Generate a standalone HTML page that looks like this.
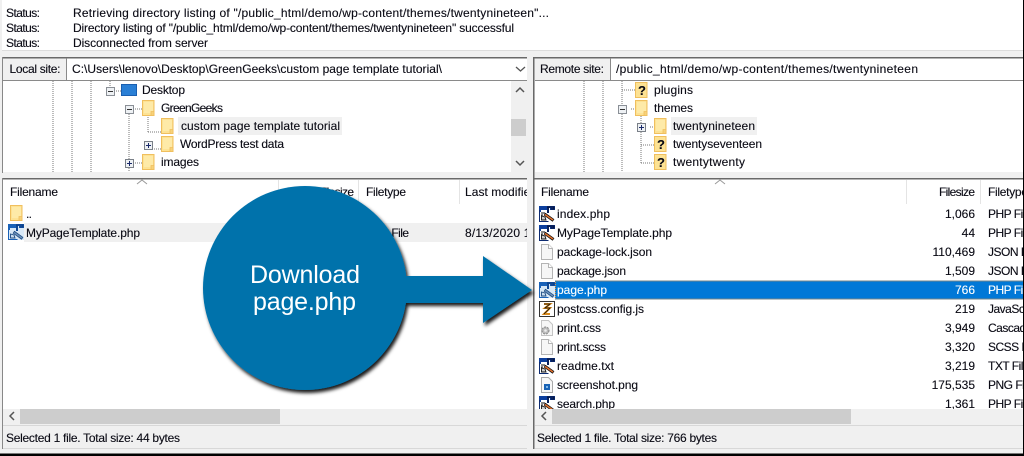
<!DOCTYPE html>
<html><head><meta charset="utf-8"><style>
html,body{margin:0;padding:0;background:#f0f0f0;width:1024px;height:456px;overflow:hidden}
svg{display:block}
text{font-family:"Liberation Sans",sans-serif;font-size:12px;fill:#0a0a14;stroke:#0a0a14;stroke-width:.12}
.d{stroke:#777;stroke-width:1;stroke-dasharray:1 1;fill:none}
.chev{fill:none;stroke:#555;stroke-width:1.3}
</style></head><body>
<svg width="1024" height="456" viewBox="0 0 1024 456" xmlns="http://www.w3.org/2000/svg">
<defs>
<symbol id="fo" viewBox="0 0 13 16" width="13" height="16"><path d="M.5.5h11.500v15H.5z" fill="#fde293" stroke="#f0bf5e"/><path d="M2 2h9v11H2z" fill="#feeaa8"/><path d="M9 15.500v-4h3v4z" fill="#f7d27a" stroke="#f0bf5e" stroke-width=".8"/></symbol>
<symbol id="php" viewBox="0 0 16 16" width="16" height="16"><rect width="16" height="16" fill="#fff"/><path d="M0 0h16v4h-5v-2h-1v5H8V4H2v2H0z" fill="#0c3f9e"/><path d="M8 1h7v2h-3.500M9 1v6" stroke="#06123c" fill="none" stroke-width="1.300"/><path d="M.5 4v11.500h9" fill="none" stroke="#0c2a70"/><path d="M2 7h4M2 9h2" stroke="#111"/><path d="M2.500 10l3.500 1 1 3H2.500z" fill="#ccc" stroke="#111" stroke-width=".9"/><path d="M5.500 8l9 6.500" stroke="#111" stroke-width="3"/><path d="M6 8.500l8 5.500" stroke="#e2702c" stroke-width="1.600"/></symbol>
<symbol id="phps" viewBox="0 0 16 16" width="16" height="16"><rect width="16" height="16" fill="#d8e8f6"/><path d="M0 0h16v4h-5v-2h-1v5H8V4H2v2H0z" fill="#1a62b8"/><path d="M8 1h7v2h-3.500M9 1v6" stroke="#0a3a80" fill="none" stroke-width="1.300"/><path d="M.5 4v11.500h9" fill="none" stroke="#1a62b8"/><path d="M2.500 10l3.500 1 1 3H2.500z" fill="#c8dcef" stroke="#1c4a80" stroke-width=".9"/><path d="M5.500 8l9 6.500" stroke="#1c4a80" stroke-width="3"/><path d="M6 8.500l8 5.500" stroke="#6a8fb8" stroke-width="1.600"/></symbol>
<symbol id="doc" viewBox="0 0 16 16" width="16" height="16"><path d="M2.500.5h7l4 4v11h-11z" fill="#f6f6f6" stroke="#b4b4b4"/><path d="M9.500.5v4h4" fill="#fff" stroke="#b4b4b4"/></symbol>
<symbol id="js" viewBox="0 0 16 16" width="16" height="16"><rect x=".5" y=".5" width="15" height="15" fill="#fff" stroke="#333"/><path d="M5 3h6l-5 4h5l-6 6h6" fill="none" stroke="#d98a1a" stroke-width="2"/><path d="M5 3h6l-5 4h5l-6 6" fill="none" stroke="#111" stroke-width=".8"/></symbol>
<symbol id="css" viewBox="0 0 16 16" width="16" height="16"><path d="M2.500.5h7l4 4v11h-11z" fill="#f6f6f6" stroke="#c4c4c4"/><circle cx="6.500" cy="10.500" r="3.500" fill="#bbb" stroke="#888" stroke-dasharray="2 1"/><circle cx="6.500" cy="10.500" r="1.300" fill="#eee"/></symbol>
<symbol id="png" viewBox="0 0 16 16" width="16" height="16"><path d="M2.500.5h7l4 4v11h-11z" fill="#f8f8f8" stroke="#aaa"/><rect x="5" y="7" width="6" height="6" fill="#1a63b5"/><rect x="7" y="9" width="2" height="2" fill="#7fb8ea"/></symbol>
<symbol id="q" viewBox="0 0 13 16" width="13" height="16"><path d="M.5.500h11.500v15H.5z" fill="#fde293" stroke="#f0bf5e"/></symbol>
<symbol id="minus" viewBox="0 0 9 9" width="9" height="9"><rect x=".5" y=".5" width="8" height="8" fill="#eef1f4" stroke="#8a8f96"/><path d="M2 4.500h5" stroke="#333"/></symbol>
<symbol id="plus" viewBox="0 0 9 9" width="9" height="9"><rect x=".5" y=".5" width="8" height="8" fill="#eef1f4" stroke="#7a8088"/><path d="M2 4.500h5M4.500 2v5" stroke="#1a2a6a"/></symbol>
<clipPath id="cR"><rect x="536" y="204" width="487" height="205"/></clipPath>
<clipPath id="cL"><rect x="3" y="180" width="524" height="229"/></clipPath>
<clipPath id="cH"><rect x="980" y="180" width="43" height="24"/></clipPath>
<filter id="sh" x="-10%" y="-10%" width="125%" height="125%"><feDropShadow dx="2" dy="3" stdDeviation="1.800" flood-color="#000" flood-opacity=".9"/></filter>
</defs>

<rect width="1024" height="456" fill="#f0f0f0"/>
<!-- message log -->
<rect x="2" y="0" width="1021" height="50" fill="#fff"/>
<rect x="2" y="50" width="1021" height="1" fill="#dcdcdc"/>
<text x="6" y="17" textLength="34">Status:</text>
<text x="6" y="32" textLength="34">Status:</text>
<text x="6" y="47" textLength="34">Status:</text>
<text x="73" y="17" textLength="476">Retrieving directory listing of "/public_html/demo/wp-content/themes/twentynineteen"...</text>
<text x="73" y="32" textLength="441">Directory listing of "/public_html/demo/wp-content/themes/twentynineteen" successful</text>
<text x="73" y="47" textLength="135">Disconnected from server</text>

<!-- left top -->
<rect x="3" y="58" width="524" height="114" fill="#fff"/>
<rect x="3" y="57" width="524" height="1.500" fill="#696969"/>
<rect x="3" y="58.500" width="63" height="21.500" fill="#f0f0f0"/>
<rect x="3" y="80" width="524" height="1" fill="#8a8a8a"/>
<rect x="66" y="58" width="1" height="22" fill="#8a8a8a"/>
<rect x="2" y="57" width="1" height="116" fill="#888"/>
<text x="9.500" y="73" textLength="51">Local site:</text>
<text x="72" y="73" textLength="370">C:\Users\lenovo\Desktop\GreenGeeks\custom page template tutorial\</text>
<path class="chev" d="M516 67l4.500 4 4.500-4"/>
<!-- left tree -->
<rect x="511" y="81" width="16" height="91" fill="#f0f0f0"/>
<rect x="511" y="119" width="15" height="17" fill="#cdcdcd"/>
<path d="M516 92l4-4 4 4M516 161l4 4 4-4" fill="none" stroke="#555" stroke-width="1.500"/>
<path class="d" d="M53 81v91M72 81v91M91 81v91M110 81v10M129 114v58M148 113v19M148 132h13M129 109h13M110 91h11M148 149h13M129 163h13"/>
<use href="#minus" x="106" y="87"/>
<use href="#minus" x="125" y="105"/>
<use href="#plus" x="144" y="141"/>
<use href="#plus" x="125" y="159"/>
<rect x="121.500" y="84.500" width="15" height="11" fill="#2a7fd5" stroke="#1a5fb0"/>
<use href="#fo" x="142" y="100"/>
<use href="#fo" x="161" y="118"/>
<use href="#fo" x="161" y="136"/>
<use href="#fo" x="142" y="154"/>
<rect x="178" y="117" width="164" height="18" fill="#f0f0f0"/>
<text x="142" y="94" textLength="43">Desktop</text>
<text x="161" y="112" textLength="62">GreenGeeks</text>
<text x="181" y="130" textLength="159">custom page template tutorial</text>
<text x="180" y="148" textLength="104">WordPress test data</text>
<text x="161" y="166" textLength="38">images</text>

<!-- right top -->
<rect x="535" y="58" width="488" height="114" fill="#fff"/>
<rect x="533" y="57" width="490" height="1.500" fill="#696969"/>
<rect x="535" y="58.500" width="75" height="21.500" fill="#f0f0f0"/>
<rect x="535" y="80" width="488" height="1" fill="#8a8a8a"/>
<rect x="610" y="58" width="1" height="22" fill="#8a8a8a"/>
<rect x="533" y="57" width="1.500" height="116" fill="#696969"/>
<text x="540" y="73" textLength="64">Remote site:</text>
<text x="616" y="73" textLength="302">/public_html/demo/wp-content/themes/twentynineteen</text>
<path class="d" d="M584 81v91M603 81v91M622 81v24M622 90h13M622 114v58M631 109h4M641 114v49M641 145h13M641 163h13M650 127h4"/>
<use href="#minus" x="618" y="105"/>
<use href="#plus" x="637" y="123"/>
<use href="#q" x="635" y="82"/>
<use href="#fo" x="635" y="100"/>
<use href="#fo" x="654" y="118"/>
<use href="#q" x="654" y="136"/>
<use href="#q" x="654" y="154"/>
<text x="638" y="95" style="font-weight:bold;font-size:13px">?</text>
<text x="657" y="149" style="font-weight:bold;font-size:13px">?</text>
<text x="657" y="167" style="font-weight:bold;font-size:13px">?</text>
<rect x="671" y="117" width="86" height="18" fill="#f0f0f0"/>
<text x="654" y="94" textLength="39">plugins</text>
<text x="654" y="112" textLength="39">themes</text>
<text x="673" y="130" textLength="82">twentynineteen</text>
<text x="673" y="148" textLength="89">twentyseventeen</text>
<text x="673" y="166" textLength="72">twentytwenty</text>

<!-- left list -->
<rect x="3" y="179" width="524" height="246" fill="#fff"/>
<rect x="2" y="178" width="525" height="1.500" fill="#696969"/>
<rect x="2" y="178" width="1" height="271" fill="#888"/>
<path d="M137 184l5-4 5 4" fill="none" stroke="#999"/>
<path d="M278.500 180v24M358.500 180v24M459.500 180v24" stroke="#e4e4e4"/>
<text x="10" y="196" textLength="48">Filename</text>
<text x="318" y="196" textLength="36">Filesize</text>
<text x="366" y="196" textLength="40">Filetype</text>
<g clip-path="url(#cL)">
<text x="465" y="196" textLength="72">Last modified</text>
<rect x="24" y="223" width="503" height="19" fill="#f0f0f0"/>
<text x="26" y="218" textLength="6">..</text>
<text x="26" y="237" textLength="114">MyPageTemplate.php</text>
<text x="366" y="237" textLength="43">PHP File</text>
<text x="465" y="237" textLength="100">8/13/2020 1:23:45</text>
</g>
<use href="#fo" x="10" y="205"/>
<use href="#phps" x="8" y="224"/>

<!-- right list -->
<rect x="535" y="179" width="488" height="246" fill="#fff"/>
<rect x="533" y="178" width="490" height="1.500" fill="#696969"/>
<rect x="533" y="178" width="1.500" height="271" fill="#696969"/>
<path d="M715 184l5-4 5 4" fill="none" stroke="#999"/>
<path d="M906.500 180v24M980.500 180v24" stroke="#e4e4e4"/>
<text x="541" y="196" textLength="48">Filename</text>
<text x="939" y="196" textLength="36">Filesize</text>
<g clip-path="url(#cH)"><text x="988" y="196" textLength="40">Filetype</text></g>
<rect x="555" y="280.500" width="468" height="19" fill="#0078d7"/>
<rect x="555.500" y="281" width="468" height="18" fill="none" stroke="#e8903a" stroke-dasharray="1 1"/>
<g clip-path="url(#cR)">
<use href="#php" x="539" y="206"/>
<use href="#php" x="539" y="225"/>
<use href="#doc" x="539" y="244"/>
<use href="#doc" x="539" y="263"/>
<use href="#phps" x="539" y="282"/>
<use href="#js" x="539" y="301"/>
<use href="#css" x="539" y="320"/>
<use href="#doc" x="539" y="339"/>
<use href="#php" x="539" y="358"/>
<use href="#png" x="539" y="377"/>
<use href="#php" x="539" y="396"/>
<text x="557" y="218" textLength="53">index.php</text>
<text x="557" y="237" textLength="115">MyPageTemplate.php</text>
<text x="557" y="256" textLength="95">package-lock.json</text>
<text x="557" y="275" textLength="69">package.json</text>
<text x="557" y="294" textLength="50" style="fill:#fff;stroke:#fff">page.php</text>
<text x="557" y="313" textLength="87">postcss.config.js</text>
<text x="557" y="332" textLength="44">print.css</text>
<text x="557" y="351" textLength="49">print.scss</text>
<text x="557" y="370" textLength="57">readme.txt</text>
<text x="557" y="389" textLength="81">screenshot.png</text>
<text x="557" y="408" textLength="58">search.php</text>
<g text-anchor="end">
<text x="975" y="218">1,066</text>
<text x="975" y="237">44</text>
<text x="975" y="256">110,469</text>
<text x="975" y="275">1,509</text>
<text x="975" y="294" style="fill:#fff;stroke:#fff">766</text>
<text x="975" y="313">219</text>
<text x="975" y="332">3,949</text>
<text x="975" y="351">3,320</text>
<text x="975" y="370">3,219</text>
<text x="975" y="389">175,535</text>
<text x="975" y="408">1,361</text>
</g>
<g style="letter-spacing:-.5px">
<text x="988" y="218">PHP File</text>
<text x="988" y="237">PHP File</text>
<text x="988" y="256">JSON File</text>
<text x="988" y="275">JSON File</text>
<text x="988" y="294" style="fill:#fff;stroke:#fff">PHP File</text>
<text x="988" y="313">JavaScript</text>
<text x="988" y="332">Cascading</text>
<text x="988" y="351">SCSS File</text>
<text x="988" y="370">TXT File</text>
<text x="988" y="389">PNG File</text>
<text x="988" y="408">PHP File</text>
</g>
</g>

<!-- scrollbars -->
<rect x="3" y="409" width="524" height="16" fill="#f0f0f0"/>
<rect x="20" y="409" width="260" height="15" fill="#cdcdcd"/>
<path d="M14 412l-4 4 4 4" fill="none" stroke="#555" stroke-width="1.500"/>
<rect x="535" y="409" width="488" height="16" fill="#f0f0f0"/>
<rect x="552" y="409" width="299" height="15" fill="#cdcdcd"/>
<path d="M546 412l-4 4 4 4" fill="none" stroke="#555" stroke-width="1.500"/>
<rect x="3" y="425" width="524" height="1" fill="#d8d8d8"/>
<rect x="535" y="425" width="488" height="1" fill="#d8d8d8"/>
<text x="6" y="442" textLength="174">Selected 1 file. Total size: 44 bytes</text>
<text x="537" y="442" textLength="180">Selected 1 file. Total size: 766 bytes</text>
<rect x="3" y="448" width="524" height="1" fill="#d8d8d8"/>
<rect x="535" y="448" width="488" height="1" fill="#d8d8d8"/>

<!-- edges -->
<rect x="527" y="51" width="6" height="403" fill="#f0f0f0"/>
<rect x="533" y="57" width="1.500" height="392" fill="#696969"/>
<rect x="1023" y="0" width="1" height="456" fill="#000"/>
<rect x="0" y="453.500" width="1024" height="2.500" fill="#000"/>

<!-- callout -->
<g filter="url(#sh)">
<path d="M395 276H483V256L532 290 483 323V303H395z" fill="#0272ab"/>
<circle cx="305" cy="288" r="102" fill="#0272ab"/>
</g>
<text x="250" y="283" textLength="110" style="font-size:25px;fill:#fff;stroke:none">Download</text>
<text x="253" y="310" textLength="103" style="font-size:25px;fill:#fff;stroke:none">page.php</text>
</svg>
</body></html>
